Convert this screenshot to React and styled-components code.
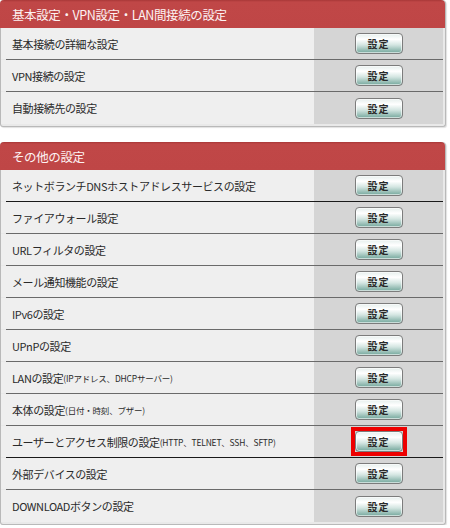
import styled, { createGlobalStyle } from "styled-components";

const Global = createGlobalStyle`
  body {
    margin: 0;
    background: #fff;
    font-family: "Noto Sans CJK JP", "Noto Sans", sans-serif;
  }
`;

const Page = styled.div`
  width: 446px;
  display: flex;
  flex-direction: column;
  gap: 15px;
`;

const Panel = styled.section`
  border: 1px solid #b9b9b9;
  border-top: none;
  border-radius: 4px 4px 3px 3px;
  background: #e9e9e9;
  padding: 0 2px 2px 0;
  box-shadow: 1px 1px 1px rgba(0, 0, 0, 0.12);
`;

const Header = styled.h2`
  margin: 0 -2px 0 -1px;
  height: 28px;
  display: flex;
  align-items: center;
  padding-left: 12px;
  border-radius: 4px 4px 0 0;
  background: linear-gradient(#a83838 0, #c04747 2px, #bf4646 100%);
  color: #fdf2f2;
  font-size: 12.5px;
  font-weight: normal;
  letter-spacing: -0.4px;
`;

const Row = styled.div`
  display: flex;
  height: ${(p) => (p.$last ? 32 : 31)}px;
`;

const Label = styled.div`
  flex: 1;
  display: flex;
  align-items: center;
  padding-left: 11px;
  background: #efefef;
  color: #2a2a2a;
  font-size: 11px;
  letter-spacing: -0.4px;
  white-space: nowrap;
`;

const Small = styled.span`
  font-size: 8.5px;
  letter-spacing: -0.2px;
`;

const Action = styled.div`
  width: 129px;
  display: flex;
  align-items: center;
  justify-content: center;
  background: #d5d5d5;
`;

const Divider = styled.div`
  height: 1px;
  margin-left: 5px;
  background: ${(p) => (p.$dark ? "#1a1a1a" : "#6a6a6a")};
`;

const Highlight = styled.span`
  display: flex;
  border: 4px solid ${(p) => (p.$active ? "#ee0000" : "transparent")};
  margin: -4px;
`;

const SetButton = styled.button`
  width: 48px;
  height: 21px;
  padding: 0;
  border: 1px solid #7c7c7c;
  border-radius: 4px;
  background: linear-gradient(#e6efed 0%, #ffffff 28%, #d3e5e1 58%, #74a79c 100%);
  box-shadow: inset 0 0 0 1px rgba(255, 255, 255, 0.6);
  color: #2a2a2a;
  font-family: "Noto Sans CJK JP", sans-serif;
  font-size: 10px;
  font-weight: bold;
  letter-spacing: 1px;
  cursor: pointer;
`;

const basic = [
  { label: "基本接続の詳細な設定" },
  { label: "VPN接続の設定" },
  { label: "自動接続先の設定" },
];

const others = [
  { label: "ネットボランチDNSホストアドレスサービスの設定", dark: true },
  { label: "ファイアウォール設定" },
  { label: "URLフィルタの設定" },
  { label: "メール通知機能の設定" },
  { label: "IPv6の設定" },
  { label: "UPnPの設定" },
  { label: "LANの設定", note: "(IPアドレス、DHCPサーバー)" },
  { label: "本体の設定", note: "(日付・時刻、ブザー)" },
  { label: "ユーザーとアクセス制限の設定", note: "(HTTP、TELNET、SSH、SFTP)", active: true, dark: true },
  { label: "外部デバイスの設定" },
  { label: "DOWNLOADボタンの設定" },
];

const SettingsPanel = ({ title, items }) => (
  <Panel>
    <Header>{title}</Header>
    {items.map((item, i) => (
      <div key={item.label}>
        <Row $last={i === items.length - 1}>
          <Label>
            {item.label}
            {item.note && <Small>{item.note}</Small>}
          </Label>
          <Action>
            <Highlight $active={item.active}>
              <SetButton>設定</SetButton>
            </Highlight>
          </Action>
        </Row>
        {i < items.length - 1 && <Divider $dark={item.dark} />}
      </div>
    ))}
  </Panel>
);

export default function App() {
  return (
    <>
      <Global />
      <Page>
        <SettingsPanel title="基本設定・VPN設定・LAN間接続の設定" items={basic} />
        <SettingsPanel title="その他の設定" items={others} />
      </Page>
    </>
  );
}
